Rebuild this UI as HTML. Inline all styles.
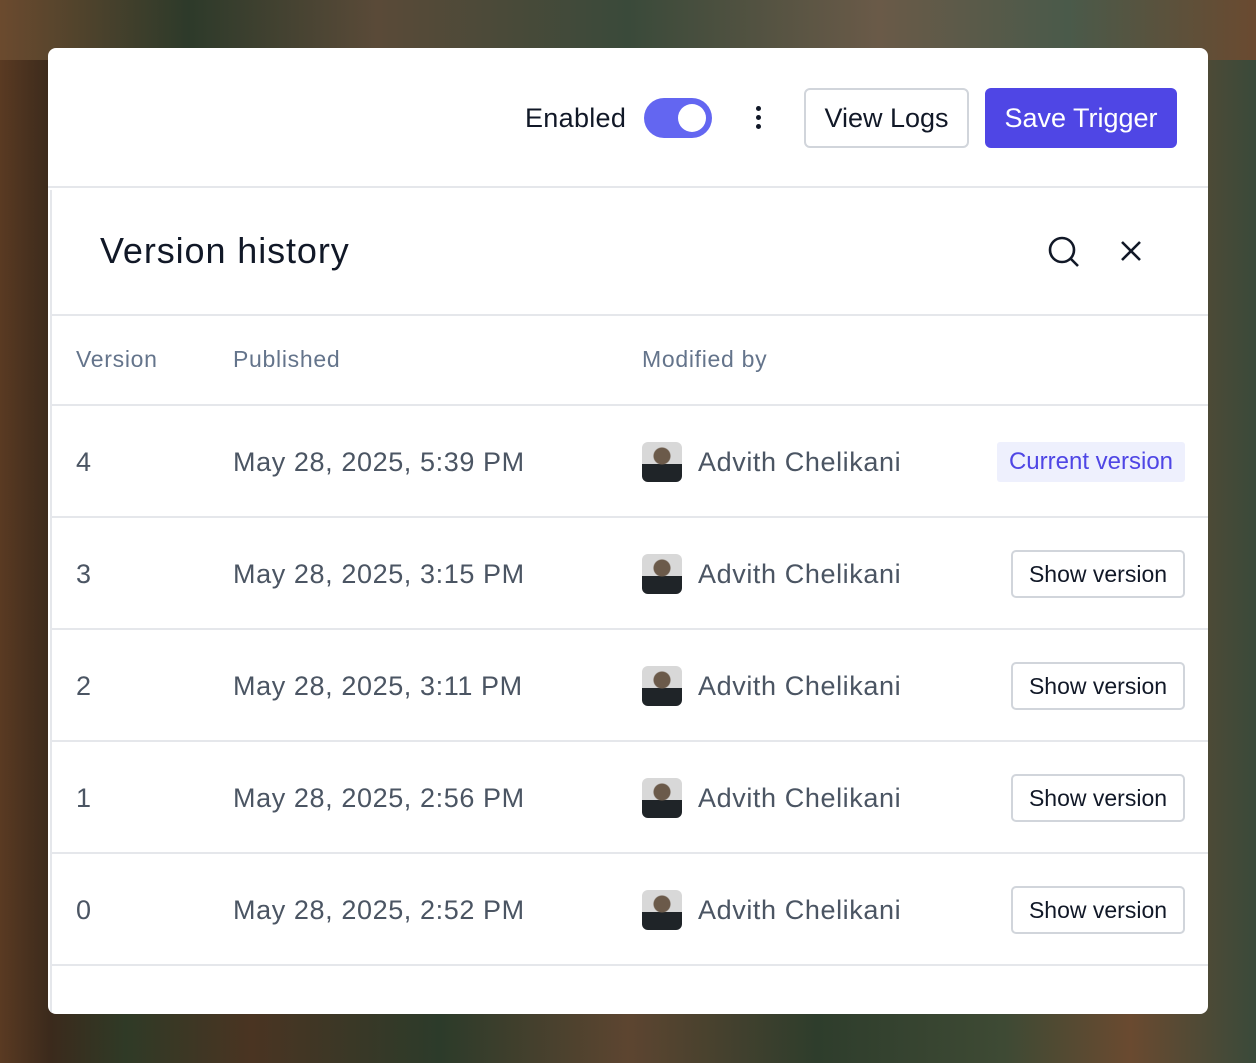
<!DOCTYPE html><html><head><style>
*{box-sizing:border-box;margin:0;padding:0}
body{width:1256px;height:1063px;overflow:hidden;font-family:"Liberation Sans",sans-serif;position:relative;
background:linear-gradient(90deg,#5a3a22 0%,#3b2a1c 4%,#2f3a26 10%,#4a3422 20%,#2c3b2a 35%,#5d4530 50%,#2e3d2c 65%,#3e4a34 80%,#6a4a30 90%,#3a4a3a 100%)}
.bgtop{position:absolute;left:0;top:0;width:1256px;height:60px;background:linear-gradient(90deg,#6b4a2e,#2d3a2a 15%,#5a4a38 30%,#3a4a3a 50%,#6a5a48 70%,#4a5a4a 85%,#6a4a30)}
.card{position:absolute;left:48px;top:48px;width:1160px;height:966px;background:#fff;border-radius:8px;overflow:hidden}
.top{position:absolute;left:0;top:0;width:1160px;height:140px;border-bottom:2px solid #e5e7eb}
.enabled{position:absolute;left:477px;top:55px;font-size:27px;color:#111827;letter-spacing:0.3px}
.tog{position:absolute;left:596px;top:50px;width:68px;height:40px;border-radius:20px;background:#6366f1}
.tog::after{content:"";position:absolute;right:6px;top:6px;width:28px;height:28px;border-radius:50%;background:#fff}
.dots{position:absolute;left:708px;top:58px}
.dots i{display:block;width:5px;height:5px;border-radius:50%;background:#111827;margin-bottom:4px}
.vl{position:absolute;left:756px;top:40px;width:165px;height:60px;border:2px solid #d1d5db;border-radius:6px;font-size:27px;color:#111827;text-align:center;line-height:56px}
.st{position:absolute;left:937px;top:40px;width:192px;height:60px;background:#4f46e5;border-radius:6px;font-size:27px;color:#fff;text-align:center;line-height:60px}
.panel{position:absolute;left:2px;top:142px;width:1160px;height:830px;border-left:2px solid #e5e7eb}
.title{position:absolute;left:48px;top:40px;font-size:36px;color:#111827;letter-spacing:0.9px}
.hr{position:absolute;left:0;width:1160px;height:2px;background:#e5e7eb}
.th{position:absolute;top:156px;font-size:23px;color:#64748b;letter-spacing:0.7px}
.row{position:absolute;left:0;width:1160px;height:112px}
.row span{position:absolute;top:41px;font-size:27px;color:#4b5563;letter-spacing:0.6px}
.av{position:absolute;left:590px;top:36px;width:40px;height:40px;border-radius:6px;background:radial-gradient(circle at 50% 35%,#6b5a4a 0 8px,transparent 9px),linear-gradient(180deg,#d8d8d8 0 55%,#1f2428 55%)}
.cur{position:absolute;left:945px;top:36px;width:188px;height:40px;background:#eef0fd;color:#4f46e5;font-size:24px;text-align:center;line-height:40px;border-radius:3px}
.sv{position:absolute;left:959px;top:32px;width:174px;height:48px;border:2px solid #d1d5db;border-radius:5px;font-size:23px;color:#111827;text-align:center;line-height:44px}
</style></head><body><div class="bgtop"></div>
<div class="card">
<div class="top"><div class="enabled">Enabled</div><div class="tog"></div><div class="dots"><i></i><i></i><i></i></div><div class="vl">View Logs</div><div class="st">Save Trigger</div></div>
<div class="panel">
<div class="title">Version history</div>
<svg style="position:absolute;left:994px;top:44px" width="36" height="36" viewBox="0 0 36 36" fill="none" stroke="#111827" stroke-width="2.6"><circle cx="16" cy="16" r="12"/><path d="M25 25l7 7"/></svg>
<svg style="position:absolute;left:1068px;top:50px" width="22" height="22" viewBox="0 0 22 22" stroke="#111827" stroke-width="2.6"><path d="M2 2l18 18M20 2L2 20"/></svg>
<div class="hr" style="top:124px"></div>
<div class="th" style="left:24px">Version</div><div class="th" style="left:181px">Published</div><div class="th" style="left:590px">Modified by</div>
<div class="hr" style="top:214px"></div>
<div class="row" style="top:216px"><span style="left:24px">4</span><span style="left:181px">May 28, 2025, 5:39 PM</span><div class="av"></div><span style="left:646px">Advith Chelikani</span><div class="cur">Current version</div></div>
<div class="hr" style="top:326px"></div>
<div class="row" style="top:328px"><span style="left:24px">3</span><span style="left:181px">May 28, 2025, 3:15 PM</span><div class="av"></div><span style="left:646px">Advith Chelikani</span><div class="sv">Show version</div></div>
<div class="hr" style="top:438px"></div>
<div class="row" style="top:440px"><span style="left:24px">2</span><span style="left:181px">May 28, 2025, 3:11 PM</span><div class="av"></div><span style="left:646px">Advith Chelikani</span><div class="sv">Show version</div></div>
<div class="hr" style="top:550px"></div>
<div class="row" style="top:552px"><span style="left:24px">1</span><span style="left:181px">May 28, 2025, 2:56 PM</span><div class="av"></div><span style="left:646px">Advith Chelikani</span><div class="sv">Show version</div></div>
<div class="hr" style="top:662px"></div>
<div class="row" style="top:664px"><span style="left:24px">0</span><span style="left:181px">May 28, 2025, 2:52 PM</span><div class="av"></div><span style="left:646px">Advith Chelikani</span><div class="sv">Show version</div></div>
<div class="hr" style="top:774px"></div>
</div></div></body></html>
